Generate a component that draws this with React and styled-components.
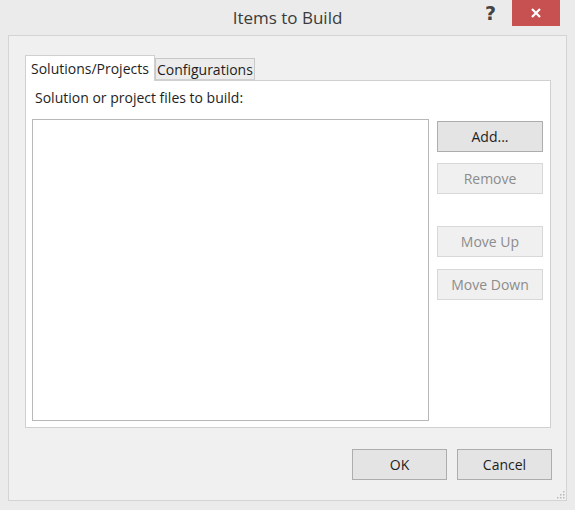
import React from 'react';
import styled, { createGlobalStyle } from 'styled-components';

const GlobalStyle = createGlobalStyle`
  html, body {
    margin: 0;
    padding: 0;
    background: #e9e9e9;
  }
  body {
    font-family: "Open Sans", "Noto Sans", "Liberation Sans", sans-serif;
  }
`;

const Window = styled.div`
  width: 575px;
  height: 510px;
  box-sizing: border-box;
  background: #ebebeb;
  display: flex;
  flex-direction: column;
  padding: 0 8px 9px 8px;
`;

const TitleBar = styled.div`
  height: 35px;
  display: flex;
  align-items: flex-start;
  position: relative;
`;

const Title = styled.div`
  flex: 1;
  text-align: center;
  font-size: 17px;
  color: #3b3b3b;
  padding-top: 6px;
`;

const HelpGlyph = styled.div`
  position: absolute;
  right: 71px;
  top: 2px;
  font-family: "DejaVu Sans", sans-serif;
  font-weight: bold;
  font-size: 19px;
  color: #444;
`;

const CloseButton = styled.div`
  position: absolute;
  right: 7px;
  top: 0;
  width: 48px;
  height: 26px;
  background: #c75050;
  display: flex;
  align-items: center;
  justify-content: center;
`;

const Client = styled.div`
  flex: 1;
  background: #f0f0f0;
  border: 1px solid #d4d4d4;
  display: flex;
  flex-direction: column;
  padding: 19px 15px 0 16px;
  position: relative;
`;

const TabRow = styled.div`
  display: flex;
  align-items: flex-end;
  height: 25px;
  position: relative;
  z-index: 1;
`;

const Tab = styled.div`
  box-sizing: border-box;
  height: ${p => (p.$active ? '26px' : '22px')};
  margin-bottom: ${p => (p.$active ? '-1px' : '0')};
  padding: 0 ${p => (p.$active ? '5px' : '1px')};
  background: ${p => (p.$active ? '#ffffff' : '#ececec')};
  border: 1px solid ${p => (p.$active ? '#d0d0d0' : '#c8c8c8')};
  border-bottom: ${p => (p.$active ? 'none' : '1px solid #d0d0d0')};
  font-size: 14px;
  color: #1e1e1e;
  display: flex;
  align-items: center;
  white-space: nowrap;
`;

const TabPage = styled.div`
  box-sizing: border-box;
  width: 526px;
  height: 348px;
  background: #ffffff;
  border: 1px solid #d0d0d0;
  padding: 6px;
  display: flex;
  flex-direction: column;
`;

const Label = styled.div`
  font-size: 14px;
  color: #1e1e1e;
  padding-left: 3px;
  height: 32px;
  line-height: 22px;
`;

const Body = styled.div`
  flex: 1;
  display: flex;
  gap: 8px;
`;

const ListBox = styled.div`
  width: 397px;
  box-sizing: border-box;
  border: 1px solid #b8b8b8;
  background: #fff;
`;

const ButtonColumn = styled.div`
  display: flex;
  flex-direction: column;
  padding-top: 2px;
`;

const Button = styled.div`
  box-sizing: border-box;
  width: ${p => p.$width || 106}px;
  height: 31px;
  margin-top: ${p => p.$gap || 0}px;
  display: flex;
  align-items: center;
  justify-content: center;
  font-size: 14px;
  background: ${p => (p.$disabled ? '#f0f0f0' : '#e4e4e4')};
  border: 1px solid ${p => (p.$disabled ? '#d8d8d8' : '#adadad')};
  color: ${p => (p.$disabled ? '#8c8c8c' : '#1e1e1e')};
`;

const Footer = styled.div`
  display: flex;
  justify-content: flex-end;
  gap: 10px;
  padding-top: 21px;
  width: 527px;
`;

const Grip = styled.svg`
  position: absolute;
  right: 1px;
  bottom: 1px;
`;

export default function App() {
  return (
    <>
      <GlobalStyle />
      <Window>
        <TitleBar>
          <Title>Items to Build</Title>
          <HelpGlyph>?</HelpGlyph>
          <CloseButton>
            <svg width="12" height="12" viewBox="0 0 12 12">
              <path d="M2 2 L10 10 M10 2 L2 10" stroke="#fff" strokeWidth="2.2" />
            </svg>
          </CloseButton>
        </TitleBar>
        <Client>
          <TabRow>
            <Tab $active>Solutions/Projects</Tab>
            <Tab>Configurations</Tab>
          </TabRow>
          <TabPage>
            <Label>Solution or project files to build:</Label>
            <Body>
              <ListBox />
              <ButtonColumn>
                <Button>Add...</Button>
                <Button $disabled $gap={11}>Remove</Button>
                <Button $disabled $gap={32}>Move Up</Button>
                <Button $disabled $gap={12}>Move Down</Button>
              </ButtonColumn>
            </Body>
          </TabPage>
          <Footer>
            <Button $width={95}>OK</Button>
            <Button $width={95}>Cancel</Button>
          </Footer>
          <Grip width="10" height="10" viewBox="0 0 10 10">
            <rect x="8" y="2" width="1.5" height="1.5" fill="#b8b8b8" />
            <rect x="5" y="5" width="1.5" height="1.5" fill="#b8b8b8" />
            <rect x="8" y="5" width="1.5" height="1.5" fill="#b8b8b8" />
            <rect x="2" y="8" width="1.5" height="1.5" fill="#b8b8b8" />
            <rect x="5" y="8" width="1.5" height="1.5" fill="#b8b8b8" />
            <rect x="8" y="8" width="1.5" height="1.5" fill="#b8b8b8" />
          </Grip>
        </Client>
      </Window>
    </>
  );
}
